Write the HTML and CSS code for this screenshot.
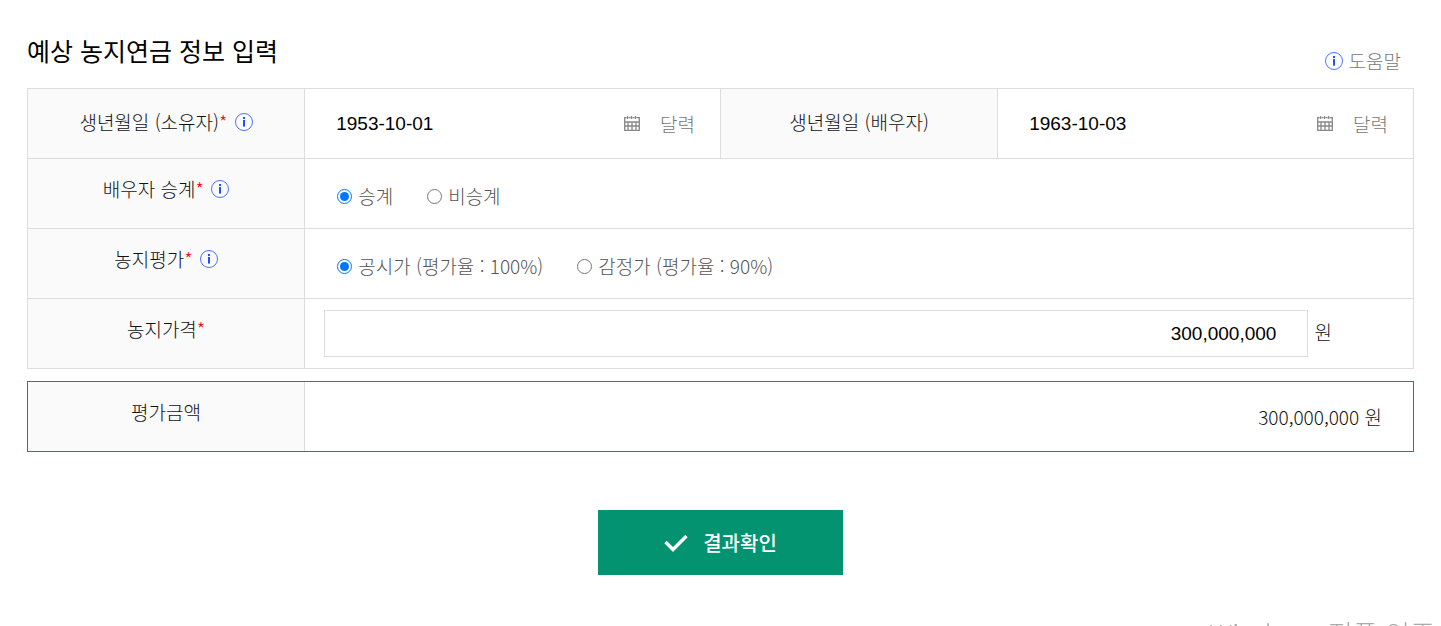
FILE: index.html
```html
<!DOCTYPE html>
<html lang="ko">
<head>
    <meta charset="UTF-8">
    <meta name="viewport" content="width=device-width, initial-scale=1.0">
    <title>예상 농지연금 정보 입력</title>
    <link rel="stylesheet" href="styles.css">
</head>
<body>
    <svg width="0" height="0" class="icon-defs" aria-hidden="true">
        <symbol id="icon-info" viewBox="0 0 18 18">
            <circle cx="9" cy="9" r="8.5" fill="none" stroke="currentColor" stroke-width="0.8"/>
            <rect x="8" y="4" width="2" height="2" fill="currentColor"/>
            <rect x="8" y="7" width="2" height="6.6" fill="currentColor"/>
        </symbol>
        <symbol id="icon-calendar" viewBox="0 0 16 15">
            <path fill="none" stroke="currentColor" stroke-width="1.3" d="M.7 1v13.300h14.600V1M0 1.700h2.500M4.500 1.700h2M8.500 1.700h2M12.500 1.700h3M3.500 0v3M7.500 0v3M11.500 0v3"/>
            <path fill="none" stroke="currentColor" stroke-width="1.3" d="M0 6h16M0 10h16M4 6v8M8 6v8M12 6v8"/>
        </symbol>
    </svg>

    <form class="pension-form" onsubmit="return false;">
        <div class="form-header">
            <h1>예상 농지연금 정보 입력</h1>
            <a href="#" class="help"><svg class="info"><use href="#icon-info"/></svg>도움말</a>
        </div>

        <table class="form-table">
            <colgroup>
                <col class="col-label"><col class="col-value"><col class="col-label"><col class="col-value">
            </colgroup>
            <tr>
                <th scope="row" class="middle">
                    <label for="ownerBirth">생년월일 (소유자)<em>*</em></label>
                    <svg class="info"><use href="#icon-info"/></svg>
                </th>
                <td>
                    <div class="date-field">
                        <input type="text" id="ownerBirth" value="1953-10-01">
                        <button type="button"><svg class="calendar"><use href="#icon-calendar"/></svg>달력</button>
                    </div>
                </td>
                <th scope="row" class="middle"><label for="spouseBirth">생년월일 (배우자)</label></th>
                <td>
                    <div class="date-field">
                        <input type="text" id="spouseBirth" value="1963-10-03">
                        <button type="button"><svg class="calendar"><use href="#icon-calendar"/></svg>달력</button>
                    </div>
                </td>
            </tr>
            <tr>
                <th scope="row">배우자 승계<em>*</em> <svg class="info"><use href="#icon-info"/></svg></th>
                <td colspan="3">
                    <div class="radio-group">
                        <label><input type="radio" name="succession" checked>승계</label>
                        <label><input type="radio" name="succession">비승계</label>
                    </div>
                </td>
            </tr>
            <tr>
                <th scope="row">농지평가<em>*</em> <svg class="info"><use href="#icon-info"/></svg></th>
                <td colspan="3">
                    <div class="radio-group">
                        <label><input type="radio" name="valuation" checked>공시가 (평가율 : 100%)</label>
                        <label><input type="radio" name="valuation">감정가 (평가율 : 90%)</label>
                    </div>
                </td>
            </tr>
            <tr>
                <th scope="row"><label for="price">농지가격<em>*</em></label></th>
                <td colspan="3">
                    <div class="price-field">
                        <input type="text" id="price" value="300,000,000">
                        <span>원</span>
                    </div>
                </td>
            </tr>
        </table>

        <table class="form-table total-table">
            <colgroup>
                <col class="col-label"><col>
            </colgroup>
            <tr>
                <th scope="row">평가금액</th>
                <td>300,000,000 원</td>
            </tr>
        </table>

        <button type="submit" class="submit">
            <svg class="check" viewBox="0 0 24 18"><path d="M1.500 8l7.500 7.500L22.500 2" fill="none" stroke="currentColor" stroke-width="3.400"/></svg>
            결과확인
        </button>
    </form>

    <div class="watermark">Windows 정품 인증</div>
</body>
</html>
```
FILE: styles.css
```css
* {
    box-sizing: border-box;
}

body {
    margin: 0;
    background-color: #fff;
    color: #111;
    font-family: 'Noto Sans CJK KR', sans-serif;
    font-size: 19px;
    font-weight: 300;
    line-height: 28px;
}

.icon-defs {
    position: absolute;
}

.pension-form {
    padding: 32px 27px 0;
}

.form-header {
    display: flex;
    justify-content: space-between;
    align-items: flex-start;
    height: 56px;
}

h1 {
    margin: 0;
    color: #000;
    font-size: 25px;
    font-weight: 400;
    line-height: 36px;
}

.help {
    display: flex;
    align-items: center;
    gap: 6px;
    padding: 15px 13px 0 0;
    color: #777;
    text-decoration: none;
}

.info {
    width: 18px;
    height: 18px;
    color: #1f4fff;
}

.form-table {
    width: 100%;
    border-collapse: collapse;
    table-layout: fixed;
}

.col-label {
    width: 20%;
}

.col-value {
    width: 30%;
}

th,
td {
    height: 70px;
    padding: 0;
    border: 1px solid #ddd;
}

th {
    padding-top: 16px;
    background-color: #fafafa;
    font-weight: 300;
    text-align: center;
    vertical-align: top;
}

th.middle {
    padding: 0 0 4px;
    vertical-align: middle;
}

th .info {
    margin-left: 2px;
    vertical-align: -1px;
}

em {
    color: #f00;
    font-style: normal;
}

input[type="text"] {
    min-width: 0;
    border: none;
    background: none;
    color: #000;
    font-family: 'Liberation Sans', Arial, sans-serif;
    font-size: 19px;
}

.date-field {
    display: flex;
    justify-content: space-between;
    align-items: center;
    padding: 0 25px 0 31px;
}

.date-field input {
    flex: 1;
    padding: 0;
}

.date-field button {
    display: flex;
    align-items: center;
    gap: 20px;
    padding: 0;
    border: none;
    background: none;
    color: #777;
    font: inherit;
    cursor: pointer;
}

.calendar {
    width: 16px;
    height: 15px;
    color: #888;
}

.radio-group {
    display: flex;
    gap: 34px;
    padding: 5px 32px 0;
    color: #555;
}

.radio-group label {
    display: flex;
    align-items: center;
    gap: 6px;
}

.radio-group input {
    width: 15px;
    height: 15px;
    margin: 0;
}

.price-field {
    display: flex;
    align-items: center;
    gap: 6px;
    padding: 0 19px;
}

.price-field input {
    width: 92%;
    height: 47px;
    padding: 0 31px;
    border: 1px solid #ddd;
    text-align: right;
}

.price-field span {
    padding-bottom: 4px;
}

.total-table {
    margin-top: 12px;
    border: 1px solid #039370;
    border-collapse: separate;
    border-spacing: 0;
}

.total-table th,
.total-table td {
    height: 69px;
    border: none;
}

.total-table th {
    border-right: 1px solid #ddd;
}

.total-table td {
    padding-right: 31px;
    text-align: right;
}

.submit {
    display: flex;
    justify-content: center;
    align-items: center;
    gap: 15px;
    width: 245px;
    height: 65px;
    margin: 58px auto 0;
    border: none;
    background-color: #039370;
    color: #fff;
    font-family: inherit;
    font-size: 20px;
    font-weight: 500;
    cursor: pointer;
}

.check {
    width: 24px;
    height: 18px;
}

.watermark {
    position: fixed;
    right: 6px;
    bottom: -22px;
    color: #aaa;
    font-size: 27px;
    white-space: nowrap;
}
```
